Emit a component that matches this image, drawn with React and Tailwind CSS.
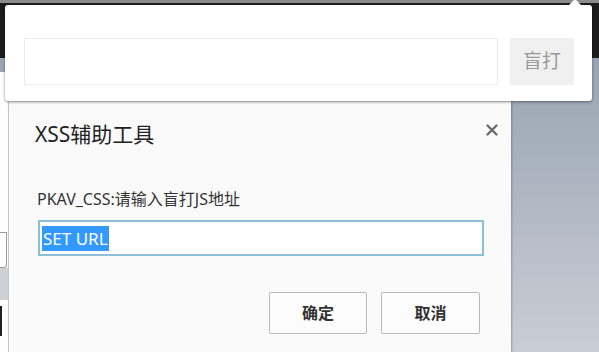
export default function App() {
  const cjk = { fontFamily: '"Noto Sans", "Noto Sans CJK SC", sans-serif' };

  return (
    <div className="relative w-[599px] h-[352px] overflow-hidden bg-white" style={cjk}>
      {/* page behind */}
      <div className="flex flex-col h-full">
        <div className="h-[58px] bg-[#1c1c1c] border-t-[3px] border-[#8c8c8c]" />
        <div className="flex flex-1">
          <div className="w-[8px] flex flex-col">
            <div className="h-[14px] bg-[#9ca6b3]" />
            <div className="h-[160px] bg-white" />
            <div className="h-[36px] bg-white border border-l-0 border-[#9a9a9a] rounded-br-[3px] w-[7px]" />
            <div className="h-[32px] bg-[#d0d1d6]" />
            <div className="h-[6px]" />
            <div className="h-[30px] w-[2px] bg-[#222]" />
          </div>
          <div className="flex-1 bg-white" />
          <div className="w-[88px] bg-gradient-to-b from-[#98a4b2] to-[#c9ced5]" />
        </div>
      </div>

      {/* dialog */}
      <div className="absolute left-[8px] top-[102px] w-[503px] h-[260px] bg-[#fafafa] border-l border-[#c4c4c4] shadow-[1px_0_2px_rgba(0,0,0,0.25)]">
        <div className="flex items-start justify-between pl-[26px] pr-[13px] pt-[18px]">
          <div className="text-[21px] leading-[28px] text-[#222]">XSS辅助工具</div>
          <svg width="12" height="12" viewBox="0 0 12 12" className="mt-[4px]">
            <path d="M1.5 1.5 L10.5 10.5 M10.5 1.5 L1.5 10.5" stroke="#6a6a6a" strokeWidth="2.4" strokeLinecap="round" />
          </svg>
        </div>
        <div className="pl-[28px] pt-[41px] text-[16px] leading-[21px] text-[#333]">PKAV_CSS:请输入盲打JS地址</div>
        <div className="ml-[29px] mt-[10px] w-[446px] h-[36px] bg-white border-2 border-[#8cc0d6] flex items-center px-[2px]">
          <span className="bg-[#3399ff] text-white text-[17px] leading-[25px] px-[1px]">SET URL</span>
        </div>
        <div className="flex justify-end gap-[14px] pr-[31px] mt-[36px]">
          <button className="w-[98px] h-[42px] border border-[#b9b9b9] rounded-[2px] bg-[#fcfcfc] text-[16px] font-bold text-[#333]">确定</button>
          <button className="w-[99px] h-[42px] border border-[#b9b9b9] rounded-[2px] bg-[#fcfcfc] text-[16px] font-bold text-[#333]">取消</button>
        </div>
      </div>

      {/* popup */}
      <div className="absolute left-[5px] top-[5px] w-[587px] h-[96px] bg-white rounded-[3px] shadow-[0_1px_3px_rgba(0,0,0,0.45)] flex items-start gap-[12px] pl-[19px] pt-[33px]">
        <svg width="14" height="7" viewBox="0 0 14 7" className="absolute left-[563px] top-[-6px]">
          <path d="M0 7 L7 0 L14 7 Z" fill="#fff" />
        </svg>
        <div className="w-[474px] h-[47px] border border-[#ececec]" />
        <div className="w-[64px] h-[47px] bg-[#f0f0f0] flex items-center justify-center text-[19px] text-[#9a9a9a]">盲打</div>
      </div>
    </div>
  );
}
